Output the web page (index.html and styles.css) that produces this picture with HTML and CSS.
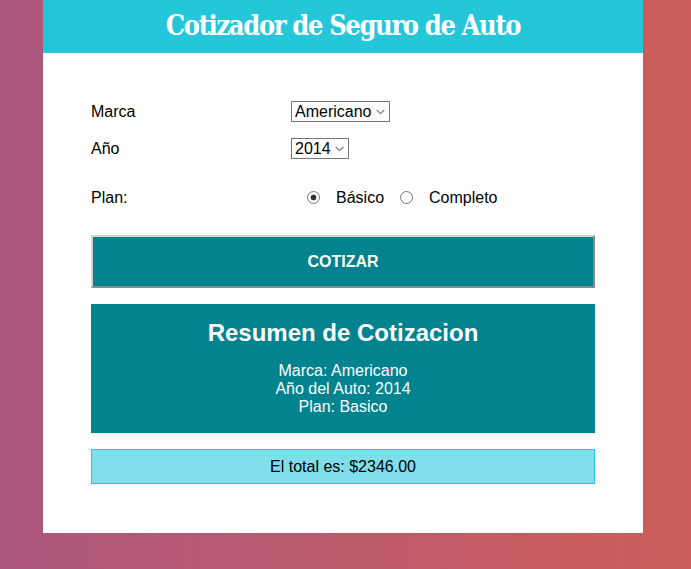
FILE: index.html
```html
<!DOCTYPE html>
<html lang="es">
<head>
<meta charset="utf-8">
<title>Cotizador de Seguro de Auto</title>
<link rel="stylesheet" href="styles.css">
</head>
<body>
<div class="page">
  <div class="app">
    <header class="header">
      <h1 class="title">Cotizador de Seguro de Auto</h1>
    </header>
    <div class="content">
      <form class="form">
        <div class="field">
          <label class="label">Marca</label>
          <select class="select">
            <option>Americano</option>
          </select>
        </div>
        <div class="field">
          <label class="label">Año</label>
          <select class="select">
            <option>2014</option>
          </select>
        </div>
        <div class="field plan">
          <label class="label">Plan:</label>
          <div class="options">
            <input class="radio" type="radio" name="plan" checked><span class="opt">Básico</span>
            <input class="radio" type="radio" name="plan"><span class="opt">Completo</span>
          </div>
        </div>
        <button type="button" class="button">COTIZAR</button>
      </form>
      <div class="summary">
        <h2 class="summary-title">Resumen de Cotizacion</h2>
        <p class="summary-line">Marca: Americano</p>
        <p class="summary-line">Año del Auto: 2014</p>
        <p class="summary-line">Plan: Basico</p>
      </div>
      <div class="total">El total es: $2346.00</div>
    </div>
  </div>
</div>
</body>
</html>
```
FILE: styles.css
```css
html, body {
  margin: 0;
  padding: 0;
  height: 100%;
}
body {
  background: linear-gradient(to right, #ad587f, #cc5d58);
  font-family: "Liberation Sans", Arial, sans-serif;
  font-size: 16px;
  color: #000;
}
.page {
  display: flex;
  justify-content: center;
  padding-right: 5px;
}
.app {
  width: 600px;
  background: #fff;
}
.header {
  background: #26c6da;
  height: 53px;
  display: flex;
  align-items: center;
  justify-content: center;
}
.title {
  margin: 0 0 2px;
  color: #fff;
  font-family: "DejaVu Serif Condensed", "DejaVu Serif", serif;
  font-weight: bold;
  font-size: 27px;
  letter-spacing: -1.35px;
}
.content {
  padding: 48px 48px 49px;
}
.field {
  display: flex;
  align-items: center;
  margin-bottom: 16px;
  height: 21px;
}
.label {
  width: 200px;
}
.select {
  -webkit-appearance: none;
  appearance: none;
  font-family: "Liberation Sans", Arial, sans-serif;
  font-size: 16px;
  height: 21px;
  line-height: 19px;
  padding: 0 17px 0 3px;
  border: 1px solid #767676;
  border-radius: 0;
  background: #fff url("data:image/svg+xml,%3Csvg xmlns='http://www.w3.org/2000/svg' width='9' height='6' viewBox='0 0 9 6'%3E%3Cpath d='M0.7 1 L4.5 4.6 L8.3 1' fill='none' stroke='%23777' stroke-width='1.1'/%3E%3C/svg%3E") no-repeat right 4px center;
  color: #000;
}
.field.plan {
  margin-top: 28px;
  margin-bottom: 27px;
}
.options {
  display: flex;
  align-items: center;
}
.radio {
  -webkit-appearance: none;
  appearance: none;
  margin: 0 16px;
  width: 13px;
  height: 13px;
  border: 1px solid #767676;
  border-radius: 50%;
  background: #fff;
  box-sizing: border-box;
}
.radio:checked {
  background: radial-gradient(circle, #333 0, #333 2.6px, #fff 3.2px);
}
.button {
  display: block;
  width: 100%;
  height: 53px;
  background: #00838f;
  color: #fff;
  font-family: "Liberation Sans", Arial, sans-serif;
  font-weight: bold;
  font-size: 16px;
  border: 2px solid #d4d4d4;
  border-right-color: #8a8a8a;
  border-bottom-color: #8a8a8a;
  margin: 0 0 16px;
  padding: 0;
}
.summary {
  background: #00838f;
  color: #fff;
  text-align: center;
  padding: 15px 0 17px;
}
.summary-title {
  margin: 0 0 15px;
  font-size: 24px;
  font-weight: bold;
  line-height: 28px;
}
.summary-line {
  margin: 0;
  line-height: 18px;
}
.total {
  margin-top: 16px;
  background: #80deea;
  border: 1px solid #26c6da;
  text-align: center;
  padding: 8px 0;
  line-height: 17px;
}
```
